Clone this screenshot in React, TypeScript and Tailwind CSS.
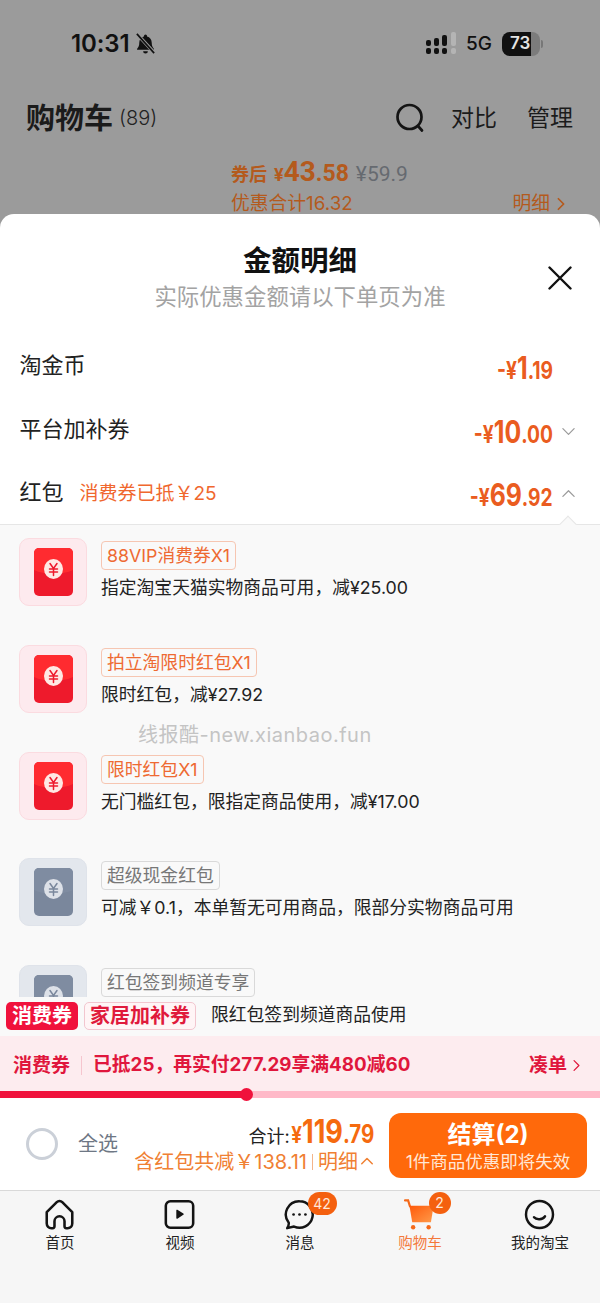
import React from "react";

const FONT = { fontFamily: '"Inter", "Noto Sans CJK SC", sans-serif' };

const Chevron: React.FC<{ dir: "up" | "down" | "right"; className?: string; width?: number }> = ({ dir, className, width = 2 }) => {
  const d = dir === "up" ? "M2 10l6-6 6 6" : dir === "down" ? "M2 5l6 6 6-6" : "M5 2l6 6-6 6";
  return (
    <svg className={className} viewBox="0 0 16 16" fill="none" stroke="currentColor" strokeWidth={width} strokeLinecap="round" strokeLinejoin="round">
      <path d={d} />
    </svg>
  );
};

const StatusBar: React.FC = () => (
  <div className="flex h-[88px] items-center pb-[1px] pl-[71px] pr-[57px] text-[#111]">
    <span className="text-[24px] font-semibold leading-none tracking-[-0.1px]">10:31</span>
    <svg className="ml-[4px] h-[23px] w-[23px]" viewBox="0 0 24 24" fill="#111">
      <path d="M12 2.500a1.600 1.600 0 0 1 1.600 1.600v.5c3 .8 4.900 3.300 4.900 6.600 0 3 .8 4.600 2.200 6.200.4.500.1 1.100-.6 1.100H3.900c-.7 0-1-.6-.6-1.100C4.700 15.800 5.500 14.200 5.500 11.200c0-3.300 1.900-5.800 4.900-6.600v-.5A1.600 1.600 0 0 1 12 2.500zM9.500 20h5a2.500 2.500 0 0 1-5 0z" />
      <path d="M3.500 2.500l17.500 19" stroke="#9b9b9b" strokeWidth="3.600" />
      <path d="M3 2l18 20" stroke="#111" strokeWidth="1.700" />
    </svg>
    <div className="flex-1" />
    <svg className="h-[24px] w-[30px]" viewBox="0 0 30 24" fill="#111">
      <rect x="0" y="8" width="5" height="6" rx="2" />
      <rect x="0" y="16" width="5" height="6" rx="2" />
      <rect x="8" y="6" width="5" height="8" rx="2" />
      <rect x="8" y="16" width="5" height="6" rx="2" />
      <rect x="16" y="3" width="5" height="11" rx="2" />
      <rect x="16" y="16" width="5" height="6" rx="2" />
      <rect x="25" y="0" width="5" height="14" rx="2" fill="#b4b4b4" />
      <rect x="25" y="16" width="5" height="6" rx="2" fill="#b4b4b4" />
    </svg>
    <span className="ml-[10px] text-[19px] font-medium leading-none">5G</span>
    <div className="ml-[10px] flex items-center">
      <div className="flex h-[24px] w-[38px] overflow-hidden rounded-[8px] bg-[#7c7c7c]">
        <div className="flex w-[29px] items-center bg-[#111] pl-[8px]">
          <span className="text-[17px] font-semibold leading-none text-[#e4e4e4]">73</span>
        </div>
      </div>
      <div className="ml-[1px] h-[8px] w-[2px] rounded-r bg-[#777]" />
    </div>
  </div>
);

const CartHeader: React.FC = () => (
  <div className="relative">
    <div className="flex h-[60px] items-center pl-[26px] pr-[27px] text-[#1b1b1b]">
      <span className="text-[29px] font-bold leading-none">购物车</span>
      <span className="ml-[6px] text-[20px] font-light leading-none text-[#222]">(89)</span>
      <div className="flex-1" />
      <svg className="h-[30px] w-[30px]" viewBox="0 0 30 30" fill="none" stroke="#141414" strokeWidth="2.700" strokeLinecap="round">
        <circle cx="14.500" cy="14" r="12" />
        <path d="M23 23l4 4.500" />
      </svg>
      <span className="ml-[26px] text-[23px] leading-none">对比</span>
      <span className="ml-[30px] text-[23px] leading-none">管理</span>
    </div>
    <div className="ml-[231px] mt-[9px] flex h-[32px] items-baseline text-[#b45a1d]" style={{ fontFamily: '"Roboto", "Noto Sans CJK SC", sans-serif' }}>
      <span className="text-[18px] font-bold">券后</span>
      <span className="ml-[7px] text-[18px] font-bold">¥</span>
      <span className="text-[28px] font-bold leading-none">43</span>
      <span className="text-[23px] font-bold">.58</span>
      <span className="ml-[7px] text-[21px] text-[#666a70]">¥59.9</span>
    </div>
    <div className="ml-[231px] mr-[32px] flex h-[30px] items-center justify-between text-[18.800px] leading-none text-[#b45a1d]">
      <span>优惠合计16.32</span>
      <span className="flex items-center">
        明细
        <Chevron dir="right" className="ml-[4px] h-[14px] w-[14px]" />
      </span>
    </div>
  </div>
);

// narrow digits: the type is scaled in x from the right edge, so the layout box keeps its right side
const Amount: React.FC<{ yen: string; cents: string }> = ({ yen, cents }) => (
  <span className="flex origin-right scale-x-[0.8] items-baseline font-bold leading-none text-[#ea5c20]">
    <span className="text-[24px]">-¥</span>
    <span className="text-[31px]">{yen}</span>
    <span className="text-[24px]">{cents}</span>
  </span>
);

const DetailRow: React.FC<{ label: string; note?: string; yen: string; cents: string; arrow?: "up" | "down" }> = ({ label, note, yen, cents, arrow }) => (
  <div className="flex h-[63.500px] items-center pl-[19.500px] pr-[25px]">
    <span className="text-[22px] leading-none text-[#222]">{label}</span>
    {note && <span className="ml-[16px] mt-[2px] text-[19px] leading-none text-[#f0672e]">{note}</span>}
    <div className="flex-1" />
    <div className="mr-[22px] mt-[5px]">
      <Amount yen={yen} cents={cents} />
    </div>
    <div className="mt-[5px] w-0">
      {arrow && <Chevron dir={arrow} width={1.300} className="-ml-[14px] h-[15px] w-[15px] text-[#9a9a9a]" />}
    </div>
  </div>
);

const Envelope: React.FC<{ muted?: boolean }> = ({ muted }) => {
  const body = muted ? "#7a879c" : "#ee1a2c";
  const flap = muted ? "#7f8ca1" : "#ff2b30";
  const coin = muted ? "#dde1e8" : "#ffe9e4";
  const mark = muted ? "#7a879c" : "#ee1a2c";
  return (
    <div className={`flex h-[68px] w-[68px] shrink-0 items-center justify-center rounded-[10px] border ${muted ? "border-[#dfe3ea] bg-[#e3e7ed]" : "border-[#fbdbe0] bg-[#fdeaee]"}`}>
      <svg className="h-[48px] w-[39px]" viewBox="0 0 39 48">
        <rect width="39" height="48" rx="5" fill={body} />
        <path d="M0 5a5 5 0 0 1 5-5h29a5 5 0 0 1 5 5v17c-10 5-29 5-39 0z" fill={flap} />
        <ellipse cx="19.500" cy="21" rx="9.500" ry="10" fill={coin} />
        <path d="M16 15.500l3.500 5 3.500-5M15.500 21h8M15.500 24h8M19.500 20.500v7" fill="none" stroke={mark} strokeWidth="1.500" strokeLinecap="round" />
      </svg>
    </div>
  );
};

const packets = [
  { tag: "88VIP消费券X1", desc: "指定淘宝天猫实物商品可用，减¥25.00" },
  { tag: "拍立淘限时红包X1", desc: "限时红包，减¥27.92" },
  { tag: "限时红包X1", desc: "无门槛红包，限指定商品使用，减¥17.00" },
  { tag: "超级现金红包", desc: "可减￥0.1，本单暂无可用商品，限部分实物商品可用", muted: true },
  { tag: "红包签到频道专享", desc: "限红包签到频道商品使用", muted: true, indent: true },
];

const PacketRow: React.FC<(typeof packets)[number]> = ({ tag, desc, muted, indent }) => (
  <div className="flex gap-[14px] pl-[19px]">
    <Envelope muted={muted} />
    <div className="pt-[3px]">
      <span className={`inline-block h-[29px] rounded-[4px] border px-[5px] text-[17.800px] leading-[27px] ${muted ? "border-[#d9d9d9] text-[#777]" : "border-[#f6c6b2] text-[#ee6a32]"}`}>
        {tag}
      </span>
      <div className={`mt-[8px] text-[17.800px] leading-[20px] text-[#222] ${indent ? "ml-[110px]" : ""}`}>{desc}</div>
    </div>
  </div>
);

const PacketList: React.FC = () => (
  <div className="relative h-[512px] border-t border-[#e6e6e6] bg-[#f9f9f9]">
    <div className="h-full overflow-hidden">
      <div className="flex flex-col gap-[38.800px] pt-[13px]">
        {packets.map((p) => (
          <PacketRow key={p.tag} {...p} />
        ))}
      </div>
    </div>
    {/* notch under the open chevron */}
    <div className="absolute right-[26px] top-[-7px] h-[12px] w-[12px] rotate-45 border-l border-t border-[#e6e6e6] bg-[#f9f9f9]" />
    <div className="absolute left-[138px] top-[200px] text-[20px] leading-none tracking-[0.5px] text-[#c4c4c4]">线报酷-new.xianbao.fun</div>
    {/* tags floating above the last row */}
    <div className="absolute bottom-0 left-0 flex h-[39px] w-[200px] gap-[6px] rounded-tr-[8px] bg-[#f9f9f9] pl-[6px] pt-[5px]">
      <span className="h-[28px] rounded-[5px] bg-[#f0123c] px-[6px] text-[20px] font-bold leading-[28px] text-white">消费券</span>
      <span className="h-[28px] rounded-[5px] border border-[#f2c6cf] bg-[#fff5f6] px-[5px] text-[20px] font-bold leading-[26px] text-[#e01a3c]">家居加补券</span>
    </div>
  </div>
);

const CouponBar: React.FC = () => (
  <div className="bg-[#fdecef]">
    <div className="flex h-[55px] items-center pl-[13px] pr-[17px] pt-[4px] text-[#e0163c]">
      <span className="text-[19px] font-bold leading-none">消费券</span>
      <span className="mx-[11px] h-[19px] w-px bg-[#f6c5ce]" />
      <span className="text-[18.800px] font-bold leading-none">已抵25，再实付277.29享满480减60</span>
      <div className="flex-1" />
      <span className="mr-[1px] text-[19px] font-bold leading-none">凑单</span>
      <Chevron dir="right" width={1.500} className="ml-[2px] h-[13px] w-[13px]" />
    </div>
    <div className="relative h-[7px] bg-[#ffb9c8]">
      <div className="h-full w-[246px] bg-[#f0123c]" />
      <div className="absolute left-[240px] top-[-3px] h-[13px] w-[13px] rounded-full bg-[#f0123c]" />
    </div>
  </div>
);

const CheckoutBar: React.FC = () => (
  <div className="flex h-[92px] items-center bg-white pl-[26px] pr-[13px]">
    <div className="h-[32px] w-[32px] rounded-full border-[3px] border-[#cbd0d8]" />
    <span className="ml-[20px] text-[20px] leading-none text-[#6e7784]">全选</span>
    <div className="flex-1" />
    <div className="mr-[15px] flex flex-col items-end">
      <div className="flex h-[32px] items-baseline">
        <span className="-mr-[20px] text-[18px] text-[#222]">合计:</span>
        <span className="ml-[3px] flex origin-right scale-x-[0.82] items-baseline font-bold leading-none text-[#f56a0f]">
          <span className="text-[23px]">¥</span>
          <span className="text-[33px]">119</span>
          <span className="text-[25px]">.79</span>
        </span>
      </div>
      <div className="mt-[3px] flex items-center text-[20px] leading-[24px] text-[#f08033]">
        含红包共减￥138.11
        <span className="mx-[5px] h-[16px] w-px bg-[#f4b48a]" />
        明细
        <Chevron dir="up" width={1.700} className="ml-[2px] h-[14px] w-[14px]" />
      </div>
    </div>
    <div className="mt-[2px] flex h-[65px] w-[198px] flex-col items-center justify-center rounded-[12px] bg-[#ff690b] pt-[2px] text-white">
      <span className="text-[24px] font-bold leading-[30px]">结算(2)</span>
      <span className="text-[17.500px] leading-[23px] text-[#ffe7d6]">1件商品优惠即将失效</span>
    </div>
  </div>
);

const Badge: React.FC<{ text: string; className: string }> = ({ text, className }) => (
  <span className={`absolute flex items-center justify-center rounded-full bg-[#f4600f] text-[14px] leading-none text-[#ffe8da] ${className}`}>{text}</span>
);

const tabs = [
  {
    label: "首页",
    icon: (
      <svg className="h-[31px] w-[31px]" viewBox="0 0 34 34" fill="none" stroke="#141414" strokeWidth="2.800" strokeLinejoin="round">
        <path d="M3 14.500L14 3.500a4.200 4.200 0 0 1 6 0l11 11V27a5 5 0 0 1-5 5h-1.500a2 2 0 0 1-2-2v-5.500a5.500 5.500 0 0 0-11 0V30a2 2 0 0 1-2 2H8a5 5 0 0 1-5-5z" />
      </svg>
    ),
  },
  {
    label: "视频",
    icon: (
      <svg className="h-[31px] w-[31px]" viewBox="0 0 34 34">
        <rect x="2" y="2.500" width="30" height="29" rx="5" fill="none" stroke="#141414" strokeWidth="2.800" />
        <path d="M13.500 12.500a.8.800 0 0 1 1.200-.7l6.500 4.200a.8.800 0 0 1 0 1.400l-6.500 4.200a.8.800 0 0 1-1.200-.7z" fill="#141414" />
      </svg>
    ),
  },
  {
    label: "消息",
    badge: <Badge text="42" className="left-[25px] top-[-5px] h-[23px] w-[29px]" />,
    icon: (
      <svg className="h-[31px] w-[31px]" viewBox="0 0 34 34" fill="none" stroke="#141414" strokeWidth="2.700" strokeLinejoin="round">
        <path d="M17 2.500a14.500 14.500 0 1 1-6 27.700L3.500 32c1.500-2.200 2-3.900 1.700-6A14.500 14.500 0 0 1 17 2.500z" />
        <circle cx="10.500" cy="17" r="1.500" fill="#141414" stroke="none" />
        <circle cx="17" cy="17" r="1.500" fill="#141414" stroke="none" />
        <circle cx="23.500" cy="17" r="1.500" fill="#141414" stroke="none" />
      </svg>
    ),
  },
  {
    label: "购物车",
    active: true,
    badge: <Badge text="2" className="left-[26px] top-[-5px] h-[22px] w-[22px]" />,
    icon: (
      <svg className="h-[31px] w-[31px]" viewBox="0 0 34 34">
        <defs>
          <linearGradient id="cartFill" x1="0" y1="0" x2="1" y2="1">
            <stop offset="0" stopColor="#ff5a0a" />
            <stop offset="1" stopColor="#ff9a4a" />
          </linearGradient>
        </defs>
        <path d="M1 1.500h3.500L6.500 8" fill="none" stroke="#f4691a" strokeWidth="2.400" strokeLinecap="round" />
        <path d="M6 7.500h26.500l-3 18H9z" fill="url(#cartFill)" />
        <circle cx="10" cy="31" r="2.400" fill="#f4691a" />
        <circle cx="27" cy="31" r="2.400" fill="#f4691a" />
      </svg>
    ),
  },
  {
    label: "我的淘宝",
    icon: (
      <svg className="h-[31px] w-[31px]" viewBox="0 0 34 34" fill="none" stroke="#141414" strokeLinecap="round">
        <circle cx="17" cy="17" r="14.800" strokeWidth="2.700" />
        <path d="M11 20c2.500 3 9.500 3 12-1" strokeWidth="2.800" />
      </svg>
    ),
  },
];

const TabBar: React.FC = () => (
  <div className="grid h-[113px] grid-cols-5 border-t border-[#d9d9d9] bg-[#f6f6f6] pt-[6px]">
    {tabs.map((tab) => (
      <div key={tab.label} className="flex flex-col items-center">
        <div className="relative -ml-[1px] flex h-[34px] w-[34px] items-center justify-center">
          {tab.icon}
          {tab.badge}
        </div>
        <span className={`mt-[2px] text-[14.500px] leading-[20px] ${tab.active ? "text-[#f4783a]" : "text-[#222]"}`}>{tab.label}</span>
      </div>
    ))}
  </div>
);

export default function App() {
  return (
    <div className="flex h-[1303px] w-[600px] flex-col overflow-hidden bg-[#9b9b9b]" style={FONT}>
      <div className="h-[214px] shrink-0 overflow-hidden">
        <StatusBar />
        <CartHeader />
      </div>
      <div className="flex flex-1 flex-col overflow-hidden rounded-t-[14px] bg-white">
        <div className="relative flex h-[119.500px] flex-col items-center pt-[28px]">
          <span className="text-[28.500px] font-bold leading-[38px] text-[#111]">金额明细</span>
          <span className="mt-[2px] text-[22.400px] leading-[30px] text-[#a3a3a3]">实际优惠金额请以下单页为准</span>
          <svg className="absolute left-[548px] top-[52px] h-[24px] w-[24px]" viewBox="0 0 24 24" fill="none" stroke="#111" strokeWidth="2.400" strokeLinecap="round">
            <path d="M1.500 1.500l21 21M22.500 1.500l-21 21" />
          </svg>
        </div>
        <div className="h-[190.500px]">
          <DetailRow label="淘金币" yen="1" cents=".19" />
          <DetailRow label="平台加补券" yen="10" cents=".00" arrow="down" />
          <DetailRow label="红包" note="消费券已抵￥25" yen="69" cents=".92" arrow="up" />
        </div>
        <PacketList />
        <CouponBar />
        <CheckoutBar />
        <TabBar />
      </div>
    </div>
  );
}
